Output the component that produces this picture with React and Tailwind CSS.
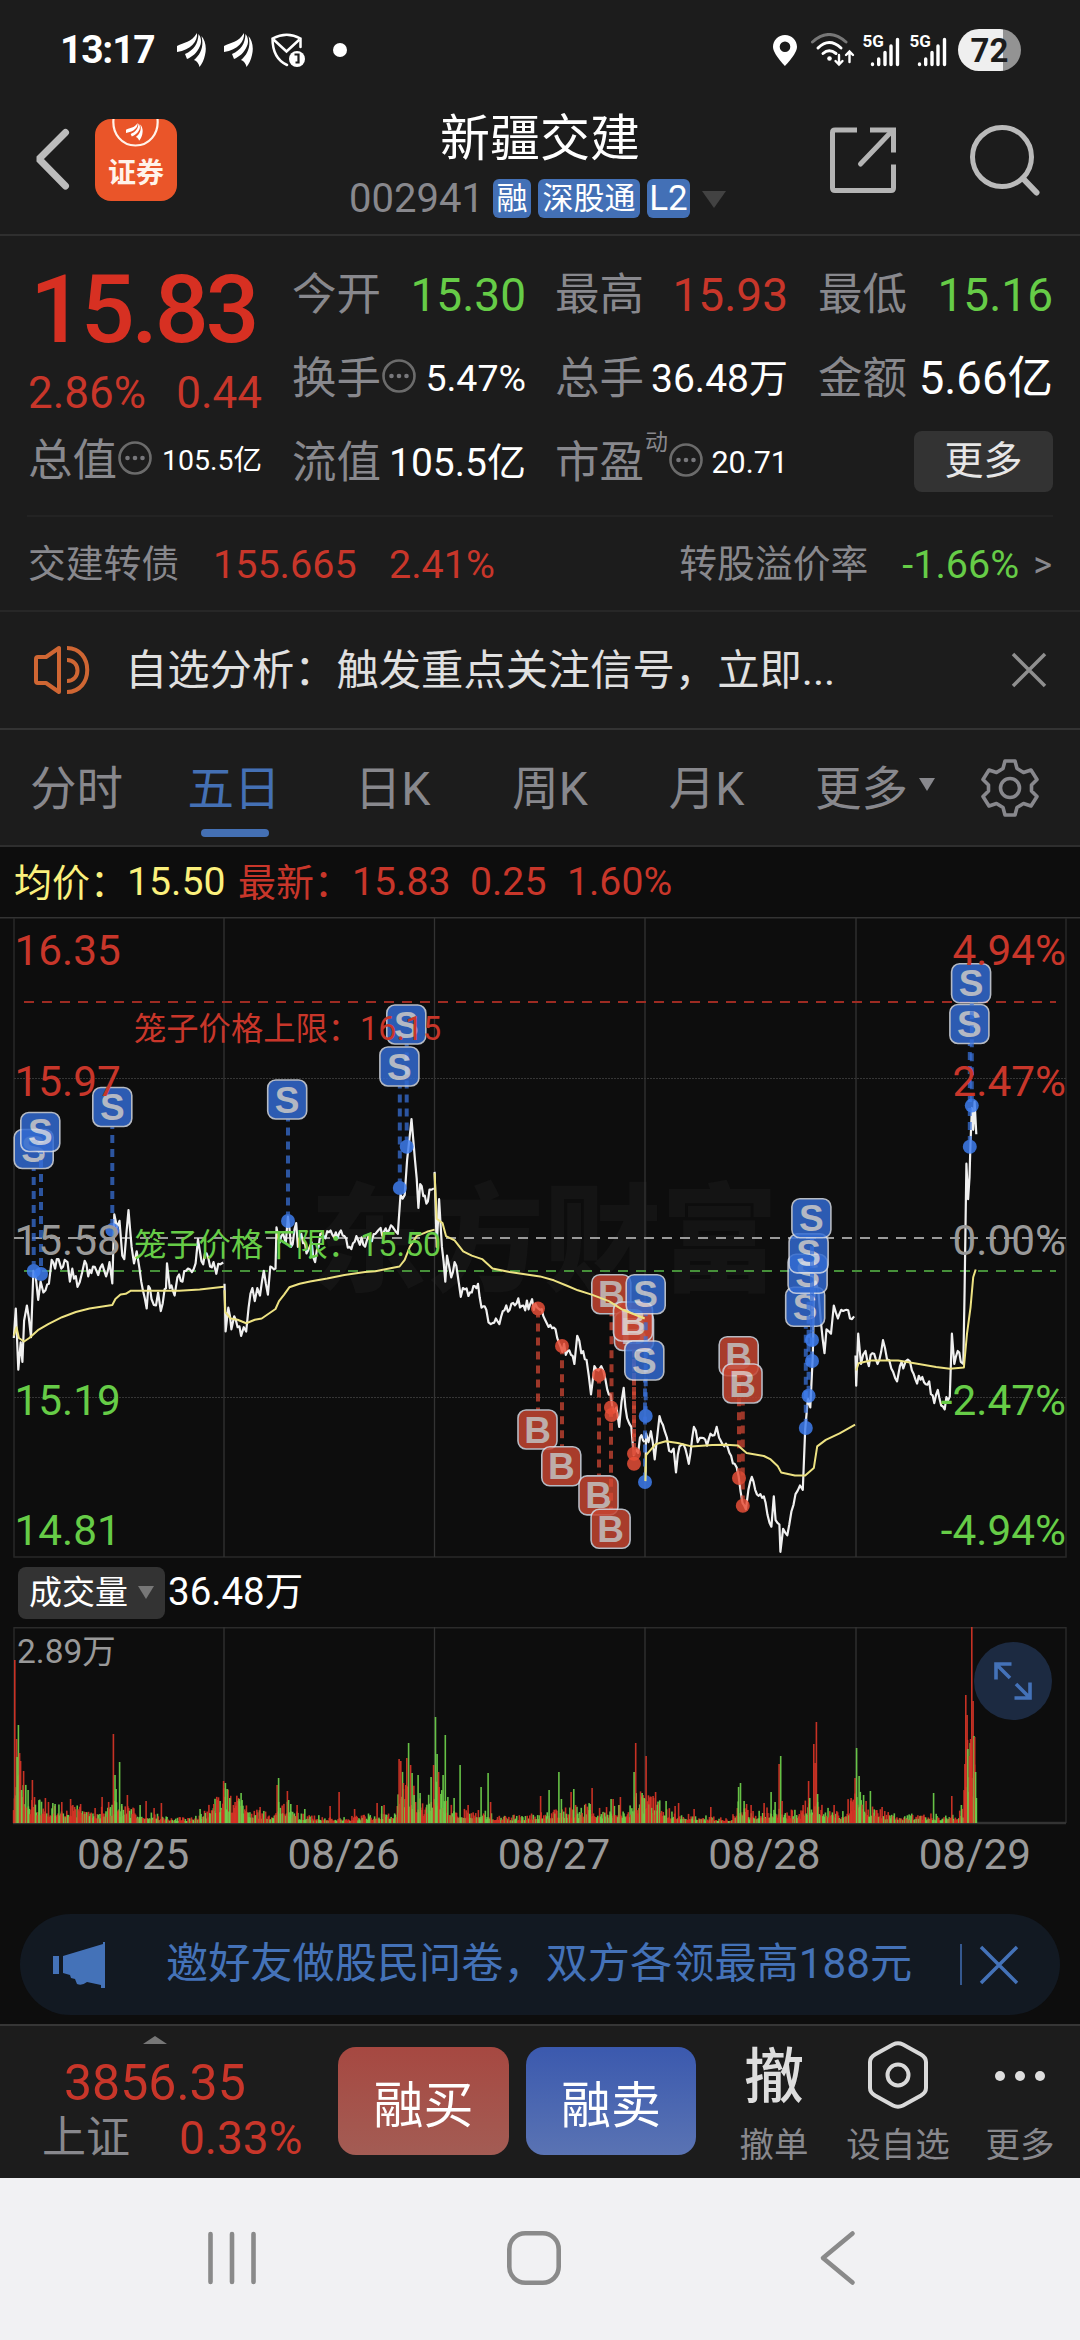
import React from 'react';
import { clsx } from 'clsx';

const RED = '#c8362a';
const GREEN = '#66cc47';

// recorded trace units -> chart pixels
const SX = 0.34439;
const SY = 0.43367;
const HALF = 1568;

// deterministic jitter so the chart never changes between renders
function makeRandom(seed) {
  let s = seed;
  return () => {
    s = (s * 1664525 + 1013904223) % 4294967296;
    return s / 4294967296;
  };
}

const parse = (str, offset = 0) =>
  str.trim().split(/\s+/).map((p) => {
    const [x, y] = p.split(',').map(Number);
    return [x + offset, y];
  });

const PRICE = [
  parse('40,1010 46,942 53,1083 60,1020 65,1065 70,970 78,935 90,1008 97,855 104,870 111,922 118,880 126,905 132,900 142,885 150,830 160,850 170,828 178,850 188,830 196,835 203,880 210,850 225,892 238,860 246,832 256,868 270,845 285,865 297,840 308,868 318,835 326,884 332,725 340,755 347,740 355,820 361,828 373,715 382,800 389,838 397,810 405,850 415,900 426,942 431,890 440,920 453,935 459,905 467,948 478,898 482,895 485,838 493,895 507,912 515,870 530,880 540,855 552,852 568,838 575,782 590,840 600,815 610,845 620,835 628,862 640,840 648,836'),
  parse('652,885 655,995 663,940 672,990 680,960 690,985 700,1005 708,985 715,995 722,940 733,895 740,925 747,895 755,912 766,855 778,910 785,845 800,850 803,755 812,790 822,770 830,790 836,730 845,800 860,745 865,800 875,770 890,815 905,790 915,835 930,770 945,780 960,762 970,778 985,768 1000,775 1015,800 1035,775 1055,795 1075,785 1095,765 1115,765 1135,750 1155,770 1163,680 1175,680 1182,600 1195,505 1205,600 1215,710 1220,655 1238,700 1247,668 1260,665'),
  [
    ...parse('1262,627 1268,800 1275,690 1283,800 1293,880 1298,820 1310,870 1320,835 1330,870 1338,915 1350,898 1370,905 1388,885 1398,940 1412,945 1425,978 1440,965 1450,978 1470,935 1480,945 1500,930 1520,935 1540,930 1560,940'),
    ...parse('0,945 10,960 30,980 45,990 60,1030 80,1040 100,1070 108,1005 120,1045 135,1060 148,1140 158,1075 170,1085 178,1075 190,1105 205,1140 215,1180 222,1170 230,1215 243,1125 253,1195 265,1215 272,1280 285,1275 290,1240 304,1250', HALF),
  ],
  parse('306,1340 308,1230 315,1250 322,1225 333,1290 340,1240 347,1190 362,1225 375,1270 388,1265 395,1320 405,1260 413,1255 422,1265 432,1300 447,1215 458,1250 470,1240 485,1258 500,1235 513,1215 520,1240 535,1260 550,1275 565,1300 577,1330 588,1390 598,1405 605,1360 615,1330 625,1360 640,1370 655,1390 672,1445 679,1375 684,1430 695,1440 698,1503 706,1450 718,1465 730,1410 742,1370 755,1350 763,1360 770,1220 778,1150 785,1170 792,1050 795,930 800,880 808,900 816,975 826,1045 832,990 845,1000 853,935 865,965 875,945 890,945 900,965 912,960', HALF),
  parse('916,1050 918,1120 924,1000 932,1070 945,1040 955,1075 965,1045 980,1070 996,1015 1008,1060 1020,1080 1037,1110 1045,1075 1055,1080 1068,1060 1080,1085 1095,1115 1110,1100 1130,1110 1145,1160 1155,1130 1170,1168 1190,1145 1196,1000 1203,1070 1213,1040 1222,1065 1229,1070 1233,900 1238,608 1243,690 1247,640 1250,560 1254,480 1258,530 1262,465 1267,540', HALF),
];

const AVERAGE = [
  parse('40,1005 48,985 55,1010 70,1018 85,1010 110,992 140,978 180,962 220,950 260,942 326,934 335,920 350,910 365,908 380,901 450,901 520,901 580,898 650,892'),
  parse('652,900 654,950 670,965 690,968 715,976 740,968 760,965 800,943 810,925 825,910 840,893 870,885 900,880 950,873 1000,865 1060,858 1090,856 1130,850 1160,845 1175,830 1190,800 1210,775 1240,765 1262,760'),
  [
    ...parse('1262,630 1268,735 1285,745 1295,775 1320,785 1345,810 1370,820 1400,828 1430,850 1480,858 1568,868'),
    ...parse('40,877 80,890 110,900 150,910 200,925 240,945 304,965', HALF),
  ],
  parse('306,1340 308,1280 335,1255 365,1248 400,1252 440,1260 500,1257 540,1256 575,1258 600,1275 650,1282 670,1290 690,1305 700,1320 740,1327 770,1327 795,1310 805,1260 830,1245 870,1230 915,1210', HALF),
  parse('918,1085 925,1068 960,1062 1040,1062 1100,1070 1150,1077 1190,1081 1231,1078 1240,1000 1250,940 1258,870 1265,852', HALF),
];

const toPath = (pts) =>
  pts.map(([x, y], i) => `${i ? 'L' : 'M'}${(x * SX).toFixed(1)} ${(900 + y * SY).toFixed(1)}`).join('');

function roughen(pts, seed) {
  const rand = makeRandom(seed);
  const out = [pts[0]];
  for (let i = 1; i < pts.length; i++) {
    const [x0, y0] = pts[i - 1];
    const [x1, y1] = pts[i];
    const steps = Math.floor((x1 - x0) / 4.5);
    for (let k = 1; k < steps; k++) {
      const t = k / steps;
      out.push([x0 + (x1 - x0) * t, y0 + (y1 - y0) * t + (rand() - 0.5) * 26]);
    }
    out.push(pts[i]);
  }
  return out;
}

// kind, box centre x / y, dot x / y
const TRADES = [
  ['S', 33.7, 1149, 33.7, 1271],
  ['S', 40.3, 1132, 41, 1274],
  ['S', 112.3, 1107, 112.3, 1230],
  ['S', 287.2, 1099.5, 288, 1221],
  ['S', 406.3, 1024.5, 406.7, 1146.7],
  ['S', 399.4, 1066.5, 399.8, 1188],
  ['B', 537.5, 1429.5, 538, 1308.5],
  ['B', 561.3, 1466.3, 562, 1346],
  ['B', 598.5, 1495.4, 599, 1375],
  ['B', 610.6, 1528.8, 611, 1407.5],
  ['B', 611.3, 1294.2, 611.5, 1415],
  ['B', 634, 1331, 634, 1453.8],
  ['B', 633, 1321.5, 634, 1463.7],
  ['S', 645.7, 1294.2, 645.7, 1416],
  ['S', 644.3, 1360.5, 645, 1482],
  ['B', 738.7, 1356.2, 739, 1478],
  ['B', 742.5, 1383.5, 742.8, 1505.8],
  ['S', 805.2, 1306.8, 805.8, 1428],
  ['S', 807.6, 1273.8, 808.6, 1395.7],
  ['S', 808.6, 1253.4, 812, 1361],
  ['S', 811.4, 1218.3, 812, 1340],
  ['S', 969.4, 1024, 969.8, 1146.8],
  ['S', 971.1, 983.3, 971.8, 1105.6],
];

const VOLUME_BASE = [
  [14, 28], [20, 40], [30, 22], [50, 15], [75, 14], [100, 11], [112, 18], [122, 14], [140, 11], [155, 8], [165, 5], [190, 4],
  [205, 10], [224, 30], [240, 20], [255, 11], [274, 8], [279, 24], [295, 9], [310, 6], [350, 5], [380, 8], [396, 12],
  [402, 40], [415, 28], [425, 14], [434, 42], [446, 22], [456, 13], [475, 11], [500, 6], [520, 6], [545, 10], [560, 12],
  [575, 11], [590, 16], [600, 11], [630, 14], [637, 24], [655, 20], [668, 11], [690, 7], [730, 4], [738, 16], [750, 8],
  [770, 13], [785, 10], [800, 10], [806, 20], [820, 17], [840, 9], [856, 26], [870, 14], [885, 9], [900, 7], [930, 7],
  [955, 6], [963, 12], [967, 70], [976, 40],
];

// x, height; negative height marks a falling minute
const SPIKES = [
  [14.7, 163], [16.5, 84], [18.3, -98], [17, -66], [19.5, 70], [20.5, 62], [21.5, -33], [23.5, 52], [28, -33], [32.3, 43], [45.3, 25],
  [55, -19], [61.7, 21], [70.5, 24], [80.5, 19], [95, 15], [102, 26], [113.3, 89], [114.9, -48], [116, -34], [119.5, -61],
  [121.7, -19], [127.3, 28], [140, -18], [146, 22], [154, 15], [161.3, 20], [200, -14], [213.7, 19], [220, -22], [223.5, 42],
  [225.3, -40], [227, -34], [229.7, -25], [235, 21], [241, -30], [239, -24], [260, 16], [277, 38], [278.5, -45], [287.3, 32],
  [288.5, -23], [290.7, -19], [297, 18], [304.7, -14], [330, 17], [339, 31], [354.5, 14], [377, 20], [381.7, -17], [384, 18],
  [399, 64], [400.7, 62], [403.3, 40], [405.7, 38], [406.7, 65], [408.5, -80], [410.5, 58], [412, -50], [414, -28], [418, -48],
  [420, -30], [431, -46], [433.5, 58], [435.4, -106], [437, -69], [438.5, 51], [443, -48], [445.2, -88], [454, -25], [460, -58],
  [468, 18], [481, -36], [488, -50], [490.5, 21], [540.5, 27], [549, -33], [558.8, -51], [561.3, -24], [571, 31], [573.7, -34],
  [575.5, 18], [592, 35], [590, -19], [611, -24], [613, 24], [619, -18], [620.3, 26], [634, -51], [635.6, 80], [642, -30],
  [644, -25], [646, 67], [650, 25], [653, 27], [655.5, 31], [666, -22], [675, 17], [678.5, 20], [694, 14], [710.7, 16],
  [738.5, -36], [740.4, -40], [744, -22], [746.5, 19], [751, 18], [764, 20], [771, -31], [775, -21], [779, 59], [780.6, -67],
  [782, 22], [803, 18], [808.5, 42], [809.6, -25], [813.7, 79], [815, 60], [816.3, 101], [817.5, -29], [834, 18], [851, 25],
  [855, 45], [856.5, -75], [859, -47], [863.5, -28], [866, 22], [870.3, -32], [882, 16], [933.5, -30], [951.7, 27], [961.3, -18],
  [964.8, 59], [965.7, 128], [967, 108], [967.8, -74], [969.5, 67], [970.5, 84], [971.7, 196], [973, 122], [973.9, -87], [974.6, 86],
  [975.5, -51], [976.3, -25],
];

function buildVolume() {
  const rand = makeRandom(29);
  const bars = [];
  let k = 0;
  for (let x = 13.5; x < 976; x += 0.872) {
    while (k < VOLUME_BASE.length - 2 && VOLUME_BASE[k + 1][0] < x) k++;
    const [x0, h0] = VOLUME_BASE[k];
    const [x1, h1] = VOLUME_BASE[k + 1];
    const t = Math.max(0, Math.min(1, (x - x0) / (x1 - x0)));
    const r = rand();
    const h = Math.max((h0 + (h1 - h0) * t) * (0.4 + r * r), 2);
    bars.push([x, rand() > 0.45 ? h : -h]);
  }
  return bars.concat(SPIKES);
}

const VOLUME = buildVolume();
const DIVIDERS = [224, 434.5, 645, 856];

function StatusBar() {
  return (
    <div className="flex h-[100px] shrink-0 items-center pl-[60px] pr-[59px] text-white">
      <span className="w-[117px] text-[39px] leading-none font-bold tracking-[-1.2px]">13:17</span>
      <Wing className="h-[34px] w-[29px]" />
      <Wing className="ml-[18px] h-[34px] w-[29px]" />
      <svg viewBox="0 0 34 34" className="ml-[18px] h-[34px] w-[34px]" fill="none">
        <path d="M1.500 5.500Q16 -2 29.500 5.500V14M1.500 5.500C1.500 17 5 27 16 32" stroke="white" strokeWidth="2.500" strokeLinecap="round" />
        <path d="M2.500 6.500L15.500 18.500L28.500 6.500" stroke="white" strokeWidth="2.500" />
        <circle cx="26" cy="26" r="8" fill="white" />
        <path d="M23.500 21.500H27.500V29.500H24.500" stroke="#1c1c1c" strokeWidth="2.200" />
      </svg>
      <span className="ml-[28px] h-[14px] w-[14px] rounded-full bg-white" />
      <svg viewBox="0 0 24 31" className="ml-auto h-[31px] w-[24px]">
        <path fillRule="evenodd" fill="white" d="M12 0C5.200 0 0 5.200 0 11.800C0 19 12 31 12 31S24 19 24 11.800C24 5.200 18.800 0 12 0ZM12 6.500a5.300 5.300 0 1 1 0 10.600a5.300 5.300 0 1 1 0-10.600Z" />
      </svg>
      <svg viewBox="0 0 44 34" className="ml-[14px] h-[34px] w-[44px]" fill="none" strokeLinecap="round">
        <path d="M1.500 9Q18 -6 35 9" stroke="#777" strokeWidth="3" />
        <path d="M7 15Q18 4 30 15M12 20.500Q18 15 25 20.500" stroke="white" strokeWidth="3" />
        <circle cx="18.500" cy="25.500" r="2.300" fill="white" />
        <path d="M28 22V31M24.500 28L28 31.500L31.500 28M38.500 29V19M35 22L38.500 18.500L42 22" stroke="white" strokeWidth="2.400" />
      </svg>
      <Signal className="ml-[7px]" />
      <Signal className="ml-[9px]" />
      <div className="ml-[11px] flex h-[42px] w-[63px] items-center justify-center rounded-full bg-linear-to-r from-[#efefef] from-72% to-[#939393] to-72% text-[33px] leading-none font-bold text-[#1c1c1c]">
        72
      </div>
    </div>
  );
}

function Wing({ className }) {
  return (
    <svg viewBox="0 0 29 34" className={className} fill="white">
      <path d="M0 13C7 9 14 10 20 0C21 8 14 17 0 19Z" />
      <path d="M8 21C17 17 21 11 21.500 1C24 4 25 9 23 13C20 20 15 24 10 26Z" />
      <path d="M17 27C24 21 27 13 24.500 3C28 7 30 14 28 22C27 27 25 31 22.500 34C22 31 20 28 17 27Z" />
    </svg>
  );
}

function Signal({ className }) {
  return (
    <svg viewBox="0 -6 38 46" className={clsx('h-[46px] w-[38px]', className)}>
      <text x="0.500" y="13.500" fontFamily="Roboto" fontWeight="700" fontSize="17" fill="white">5G</text>
      <path d="M10.500 31V31.500M16.700 26V31.500M23 19.500V31.500M29 13V31.500M35.500 6.500V31.500" stroke="white" strokeWidth="3.400" strokeLinecap="round" />
    </svg>
  );
}

function Header() {
  return (
    <div className="relative flex h-[136px] shrink-0 items-center border-b-2 border-[#2f2f2f]">
      <svg viewBox="0 0 36 62" className="ml-[34px] mt-[-16px] h-[62px] w-[36px]" fill="none">
        <path d="M31.500 4.500L5 31L31.500 58" stroke="#bcbcbc" strokeWidth="7" strokeLinecap="round" strokeLinejoin="bevel" />
      </svg>
      <div className="ml-[25px] mt-[-15px] flex h-[82px] w-[82px] flex-col items-center overflow-hidden rounded-[16px] bg-[#ea5529]">
        <svg viewBox="0 0 82 34" className="h-[34px] w-[82px] shrink-0" fill="none">
          <path d="M18.500 0C17 15 27 26.500 40.500 26.500S64 15 62.500 0" stroke="#fff3ea" strokeWidth="2.200" />
          <g transform="translate(31 4) scale(0.58 0.52)" fill="white">
            <path d="M0 13C7 9 14 10 20 0C21 8 14 17 0 19Z" />
            <path d="M8 21C17 17 21 11 21.500 1C24 4 25 9 23 13C20 20 15 24 10 26Z" />
            <path d="M17 27C24 21 27 13 24.500 3C28 7 30 14 28 22C27 27 25 31 22.500 34C22 31 20 28 17 27Z" />
          </g>
        </svg>
        <span className="-mt-[1px] font-['Noto_Sans_CJK_SC',sans-serif] text-[28px] leading-[38px] font-bold text-[#fff3ea]">证券</span>
      </div>
      <div className="absolute top-0 left-[349px] flex w-[380px] flex-col">
        <div className="mt-[12px] h-[54px] pl-[91px] text-[50px] leading-[54px] text-white">新疆交建</div>
        <div className="mt-[12px] flex h-[41px] items-center text-white">
          <span className="w-[144px] text-[40px] leading-none text-[#88888d]">002941</span>
          <Badge className="w-[38px]">融</Badge>
          <Badge className="ml-[7px] w-[102px]">深股通</Badge>
          <Badge className="ml-[7px] w-[43px] text-[35px]">L2</Badge>
          <span className="ml-[12px] mt-[2px] border-x-[12px] border-t-[17px] border-x-transparent border-t-[#424242]" />
        </div>
      </div>
      <svg viewBox="0 0 68 68" className="ml-auto mr-[72px] mt-[-14px] h-[68px] w-[68px]" fill="none" stroke="#b4b4b4" strokeWidth="5">
        <path d="M28 4H6Q3.500 4 3.500 6.500V62Q3.500 64.500 6 64.500H62Q64.500 64.500 64.500 62V38.500M41 4H64.500V26.500" />
        <path d="M63 5L31.500 38" strokeLinecap="round" />
      </svg>
      <svg viewBox="0 0 72 72" className="mr-[39px] mt-[-14px] h-[72px] w-[72px]" fill="none" stroke="#bababa">
        <circle cx="33" cy="33" r="29.500" strokeWidth="5" />
        <path d="M54 54.500L67.500 68.500" strokeWidth="6" strokeLinecap="round" />
      </svg>
    </div>
  );
}

function Badge({ className, children }) {
  return (
    <span className={clsx('flex h-[39px] shrink-0 items-center justify-center rounded-[6px] bg-[#4370b6] text-[31px] leading-none', className)}>
      {children}
    </span>
  );
}

function Ellipsis() {
  return (
    <svg viewBox="0 0 34 34" className="h-[34px] w-[34px] shrink-0">
      <circle cx="17" cy="17" r="15.500" fill="none" stroke="#6b6b6b" strokeWidth="2.600" />
      <g fill="#77777b">
        <circle cx="9.500" cy="17" r="2.300" />
        <circle cx="17" cy="17" r="2.300" />
        <circle cx="24.500" cy="17" r="2.300" />
      </g>
    </svg>
  );
}

function Stat({ label, info, sup, value, className }) {
  return (
    <div className="flex h-[84px] items-center">
      <span className="-ml-[1px] text-[44.5px] leading-none text-[#88888d]">{label}</span>
      {sup && <span className="-mt-[42px] ml-[1px] text-[23px] leading-none text-[#88888d]">{sup}</span>}
      {info && <span className="ml-[1px] -mt-[6px]"><Ellipsis /></span>}
      <span className={clsx('ml-auto leading-none whitespace-nowrap', className)}>{value}</span>
    </div>
  );
}

function Quote() {
  return (
    <div className="mx-[27px] flex h-[281px] shrink-0 border-b-2 border-[#232323] pt-[16px]">
      <div className="flex w-[235px] shrink-0 flex-col">
        <div className="h-[115px] pl-[3px] text-[95px] leading-[115px] font-medium tracking-[-3.200px] text-[#d73022]">15.83</div>
        <div className="flex h-[52px] items-center justify-between pl-[1px] text-[44px] leading-none text-[#c8362a]">
          <span>2.86%</span>
          <span>0.44</span>
        </div>
        <div className="pl-[2px]">
          <Stat label="总值" info value="105.5亿" className="text-[28.5px] text-white" />
        </div>
      </div>
      <div className="mt-px ml-[31px] w-[233px]">
        <Stat label="今开" value="15.30" className="text-[46px] text-[#66cc47]" />
        <Stat label="换手" info value="5.47%" className="text-[37.500px] text-white" />
        <Stat label="流值" value="105.5亿" className="text-[39px] text-white" />
      </div>
      <div className="mt-px ml-[30px] w-[232px]">
        <Stat label="最高" value="15.93" className="text-[46px] text-[#c8362a]" />
        <Stat label="总手" value="36.48万" className="text-[39px] text-white" />
        <Stat label="市盈" sup="动" info value="20.71" className="text-[30.500px] text-white" />
      </div>
      <div className="mt-px ml-[31px] w-[234px]">
        <Stat label="最低" value="15.16" className="text-[46px] text-[#66cc47]" />
        <Stat label="金额" value="5.66亿" className="text-[45.500px] text-white" />
        <button className="mt-[10px] ml-auto flex h-[61px] w-[139px] items-center justify-center rounded-[8px] bg-[#333] text-[39px] leading-none text-[#e6e6e6]">
          更多
        </button>
      </div>
    </div>
  );
}

function BondRow() {
  return (
    <div className="flex h-[95px] shrink-0 items-center border-b-2 border-[#272727] px-[28px] pt-[2px] text-[39.500px] leading-none text-[#c8362a]">
      <span className="w-[185px] text-[37.800px] text-[#88888d]">交建转债</span>
      <span className="w-[176px]">155.665</span>
      <span>2.41%</span>
      <span className="ml-auto text-[37.800px] text-[#88888d]">转股溢价率</span>
      <span className="ml-[34px] text-[#66cc47]">-1.66%</span>
      <span className="ml-[14px] text-[36px] text-[#88888d]">&gt;</span>
    </div>
  );
}

function Notice() {
  return (
    <div className="flex h-[118px] shrink-0 items-center border-b-2 border-[#333] pr-[33px] pl-[32px]">
      <svg viewBox="0 0 60 50" className="h-[50px] w-[60px]" fill="none" stroke="#cf6633" strokeWidth="4" strokeLinejoin="round">
        <path d="M4 14Q4 12 6 12H14L27 3V47L14 38H6Q4 38 4 36Z" />
        <path d="M35 3C62 3 62 47 35 47M35 15C49 15 49 36 35 36" />
      </svg>
      <span className="mt-[2px] ml-[33px] text-[42.300px] leading-none text-[#e0e0e0]">自选分析：触发重点关注信号，立即...</span>
      <svg viewBox="0 0 36 36" className="ml-auto h-[36px] w-[36px]">
        <path d="M2 2L34 34M34 2L2 34" stroke="#8f8f8f" strokeWidth="3.500" />
      </svg>
    </div>
  );
}

const TABS = [
  { label: '分时', width: 'w-[157px]' },
  { label: '五日', width: 'w-[158px]', active: true },
  { label: '日K', width: 'w-[159px]' },
  { label: '周K', width: 'w-[156px]' },
  { label: '月K', width: 'w-[157px]' },
];

function Tabs() {
  return (
    <div className="flex h-[117px] shrink-0 border-b-2 border-[#2e2e2e] text-[46.500px] leading-none text-[#88888d]">
      {TABS.map((tab) => (
        <div key={tab.label} className={clsx('relative flex items-center justify-center pt-[4px] first:-ml-px', tab.width)}>
          <span className={clsx('-ml-[2px]', tab.active && 'text-[#4470b4]')}>{tab.label}</span>
          {tab.active && <span className="absolute bottom-[8px] left-1/2 h-[8px] w-[68px] -translate-x-1/2 rounded-full bg-[#4470b4]" />}
        </div>
      ))}
      <div className="ml-[29px] flex items-center pt-[4px]">
        更多
        <span className="ml-[11px] -mt-[10px] border-x-[8px] border-t-[13px] border-x-transparent border-t-[#88888d]" />
      </div>
      <svg viewBox="0 0 60 60" className="my-auto ml-[45px] h-[60px] w-[60px]" fill="none" stroke="#88888d" strokeWidth="3.600" strokeLinejoin="round">
        <path d="M25 3H35L37 10.500L43.500 14.500L51 12L57 21.500L51.500 27V33L57 38.500L51 48L43.500 45.500L37 49.500L35 57H25L23 49.500L16.500 45.500L9 48L3 38.500L8.500 33V27L3 21.500L9 12L16.500 14.500L23 10.500Z" />
        <circle cx="30" cy="30" r="9.500" />
      </svg>
    </div>
  );
}

function PriceLine() {
  return (
    <div className="flex h-[70px] shrink-0 items-center pt-[2px] pl-[14px] text-[39.200px] leading-none text-[#c8362a]">
      <span className="w-[113px] text-[38px] whitespace-nowrap text-[#fbf07c]">均价：</span>
      <span className="w-[111px] text-[#fbf07c]">15.50</span>
      <span className="w-[114px] text-[38px] whitespace-nowrap">最新：</span>
      <span className="w-[118px]">15.83</span>
      <span className="w-[97px]">0.25</span>
      <span>1.60%</span>
    </div>
  );
}

function Trade({ trade }) {
  const [kind, x, y, dotX, dotY] = trade;
  const sell = kind === 'S';
  return (
    <g opacity="0.84">
      <line x1={dotX} x2={dotX} y1={y} y2={dotY} stroke={sell ? '#3a72dc' : '#d84a35'} strokeWidth="4" strokeDasharray="8 6" opacity="0.85" />
      <circle cx={dotX} cy={dotY} r="7" fill={sell ? '#3f7ef0' : '#e84f38'} />
      <rect x={x - 19.5} y={y - 19.5} width="39" height="39" rx="8" fill={sell ? '#326bd2' : '#c64531'} stroke="#d6dbe6" strokeWidth="1.600" />
      <text x={x} y={y + 13} textAnchor="middle" fontFamily="Liberation Sans" fontWeight="700" fontSize="37" fill={sell ? '#d3d9e6' : '#dfccc9'}>{kind}</text>
    </g>
  );
}

function PriceChart() {
  const axis = [
    [965, '16.35', '4.94%', RED],
    [1096, '15.97', '2.47%', RED],
    [1254.5, '15.58', '0.00%', '#999999'],
    [1415, '15.19', '-2.47%', GREEN],
    [1545, '14.81', '-4.94%', GREEN],
  ];
  return (
    <svg viewBox="0 917 1080 641" className="block h-[641px] w-full shrink-0" fontFamily="Roboto, 'Noto Sans CJK SC', sans-serif">
      <text x="310" y="1282" fontSize="117" fontWeight="900" fill="#141414">东方财富</text>
      <path d="M0 917.500H1080" stroke="#333" strokeWidth="2" />
      <path d="M14 918V1557H1066V918" fill="none" stroke="#282828" strokeWidth="1.500" />
      {DIVIDERS.map((x) => <path key={x} d={`M${x} 918V1557`} stroke="#333" strokeWidth="1.300" />)}
      <path d="M14 1078.500H1066M14 1397.500H1066" stroke="#363636" strokeWidth="1" strokeDasharray="2 1" />
      <path d="M14 1238H1066" stroke="#9a9a9a" strokeWidth="1.800" strokeDasharray="10 8" />
      <path d="M24 1002H1056" stroke="#9d2b22" strokeWidth="1.800" strokeDasharray="10 8" />
      <path d="M24 1271H1056" stroke="#46903a" strokeWidth="1.800" strokeDasharray="10 8" />
      {PRICE.map((pts, i) => (
        <path key={i} d={toPath(roughen(pts, 11 + i))} fill="none" stroke="#f0f0f0" strokeWidth="2.200" strokeLinejoin="round" />
      ))}
      {TRADES.map((trade, i) => <Trade key={i} trade={trade} />)}
      {AVERAGE.map((pts, i) => (
        <path key={i} d={toPath(pts)} fill="none" stroke="#ede282" strokeWidth="2" strokeLinejoin="round" />
      ))}
      {axis.map(([y, price, pct, color]) => (
        <g key={price} fontSize="42.300" fill={color}>
          <text x="14.500" y={y}>{price}</text>
          <text x="1066" y={y} textAnchor="end">{pct}</text>
        </g>
      ))}
      <text x="134" y="1040" fontSize="32.300" fill={RED}>笼子价格上限：16.15</text>
      <text x="134" y="1255.500" fontSize="32.300" fill={GREEN}>笼子价格下限：15.50</text>
    </svg>
  );
}

function VolumePanel() {
  return (
    <div className="relative shrink-0">
      <div className="flex h-[69px] items-center pl-[18px] text-white">
        <button className="flex h-[52px] w-[147px] items-center rounded-[8px] bg-[#333] pl-[11px] text-[33px] leading-none">
          成交量
          <span className="ml-[10px] border-x-[8px] border-t-[13px] border-x-transparent border-t-[#777]" />
        </button>
        <span className="ml-[3px] text-[38.500px] leading-none">36.48万</span>
      </div>
      <svg viewBox="0 1627 1080 198" className="block h-[198px] w-full" fontFamily="Roboto, 'Noto Sans CJK SC', sans-serif">
        <path d="M14 1823V1627.700H1066V1823" fill="none" stroke="#2b2b2b" strokeWidth="1.400" />
        {DIVIDERS.map((x) => <path key={x} d={`M${x} 1627V1823`} stroke="#333" strokeWidth="1.300" />)}
        <path d="M13 1823H1066" stroke="#333" strokeWidth="2.500" />
        {VOLUME.map(([x, h], i) => (
          <rect key={i} x={x - 0.7} y={1823 - Math.abs(h)} width="1.600" height={Math.abs(h)} fill={h > 0 ? '#d63426' : '#6ed04b'} opacity="0.92" />
        ))}
        <text x="17" y="1663" fontSize="33.500" fill="#999">2.89万</text>
      </svg>
      <div className="flex h-[60px] items-center pl-[28px] text-[42.200px] leading-none text-[#999]">
        {['08/25', '08/26', '08/27', '08/28', '08/29'].map((day) => (
          <span key={day} className="w-[210.4px] text-center">{day}</span>
        ))}
      </div>
      <button className="absolute top-[84px] right-[28px] flex h-[78px] w-[78px] items-center justify-center rounded-full bg-[#1c2a41]">
        <svg viewBox="0 0 40 40" className="h-[40px] w-[40px]" fill="none" stroke="#4472b8" strokeWidth="3.600">
          <path d="M18.500 3H3V18.500M3 3L17 17M21.500 37H37V21.500M37 37L23 23" />
        </svg>
      </button>
    </div>
  );
}

function Banner() {
  return (
    <div className="mx-[20px] mt-[29px] flex h-[101px] shrink-0 items-center rounded-full bg-[#121922] pl-[33px] text-[#4472b8]">
      <svg viewBox="0 0 52 46" className="h-[46px] w-[52px]" fill="currentColor">
        <path d="M0 14H6V32H0ZM10 14L50 2V0H52V46H48V43L34 40Q29 44 24 42L22 37L18 36L17 33L10 31Z" />
      </svg>
      <span className="ml-[61px] text-[42.200px] leading-none whitespace-nowrap">邀好友做股民问卷，双方各领最高188元</span>
      <span className="ml-auto h-[41px] w-[2px] bg-[#35588f]" />
      <svg viewBox="0 0 40 40" className="mr-[41px] ml-[17px] h-[40px] w-[40px]">
        <path d="M2 2L38 38M38 2L2 38" stroke="currentColor" strokeWidth="3.500" />
      </svg>
    </div>
  );
}

function Action({ label, className, children }) {
  return (
    <div className={clsx('flex flex-col items-center', className)}>
      <div className="mt-[15px] flex h-[70px] items-center justify-center">{children}</div>
      <span className="mt-[17px] text-[34.500px] leading-none whitespace-nowrap text-[#88888d]">{label}</span>
    </div>
  );
}

function BottomBar() {
  return (
    <div className="mt-[9px] flex h-[154px] shrink-0 border-t-2 border-[#363636] bg-[#1c1c1c]">
      <div className="flex w-[338px] flex-col pr-[26px]">
        <span className="mt-[10px] ml-[143px] h-0 w-0 border-x-[12px] border-b-[8px] border-x-transparent border-b-[#777]" />
        <span className="mt-[11px] pl-[64px] text-[50px] leading-[56px] text-[#c8362a]">3856.35</span>
        <div className="flex h-[54px] items-center pl-[42px] text-[44px] leading-none text-[#88888d]">
          上证
          <span className="ml-[49px] text-[46px] text-[#c8362a]">0.33%</span>
        </div>
      </div>
      <button className="mt-[21px] flex h-[108px] w-[171px] items-center justify-center rounded-[18px] bg-linear-to-b from-[#a64841] to-[#a35c54] pt-[9px] text-[50px] leading-none text-white">融买</button>
      <button className="mt-[21px] ml-[17px] flex h-[108px] w-[170px] items-center justify-center rounded-[18px] bg-linear-to-b from-[#3b59ae] to-[#5a73b3] pt-[9px] text-[50px] leading-none text-white">融卖</button>
      <Action label="撤单" className="ml-[28px] w-[100px]">
        <span className="mt-[4px] text-[60px] leading-none font-medium text-[#dedede]">撤</span>
      </Action>
      <Action label="设自选" className="ml-[14px] w-[120px]">
        <svg viewBox="0 0 60 68" className="-mt-[2px] h-[68px] w-[60px]" fill="none" stroke="#d9d9d9" strokeWidth="4">
          <path d="M25 3.500Q30 1 35 3.500L53 13.500Q58 16.500 58 21V47Q58 51.500 53 54.500L35 64.500Q30 67 25 64.500L7 54.500Q2 51.500 2 47V21Q2 16.500 7 13.500Z" />
          <circle cx="30" cy="34" r="10.500" />
        </svg>
      </Action>
      <Action label="更多" className="ml-[12px] w-[100px]">
        <div className="flex gap-[10px]">
          <span className="h-[10px] w-[10px] rounded-full bg-[#dedede]" />
          <span className="h-[10px] w-[10px] rounded-full bg-[#dedede]" />
          <span className="h-[10px] w-[10px] rounded-full bg-[#dedede]" />
        </div>
      </Action>
    </div>
  );
}

function NavBar() {
  return (
    <div className="flex flex-1 bg-[#f1f1f3] pt-[52px]">
      <svg viewBox="0 0 52 56" className="ml-[206px] h-[56px] w-[52px]" stroke="#8a8a8a" strokeWidth="4.600" strokeLinecap="round">
        <path d="M4.500 4V52M26 4V52M47.500 4V52" />
      </svg>
      <svg viewBox="0 0 56 56" className="ml-[248px] h-[56px] w-[56px]" fill="none" stroke="#8a8a8a" strokeWidth="4.600">
        <rect x="3.300" y="3.300" width="49.400" height="49.400" rx="16" />
      </svg>
      <svg viewBox="0 0 38 56" className="ml-[257px] h-[56px] w-[38px]" fill="none" stroke="#8a8a8a" strokeWidth="4.600" strokeLinecap="round" strokeLinejoin="round">
        <path d="M33.500 3.500L4 28L33.500 52.500" />
      </svg>
    </div>
  );
}

export default function App() {
  return (
    <div className="flex h-[2340px] w-[1080px] flex-col overflow-hidden bg-[#0d0d0d] font-[Roboto,'Noto_Sans_CJK_SC',sans-serif]">
      <div className="flex shrink-0 flex-col bg-[#1c1c1c]">
        <StatusBar />
        <Header />
        <Quote />
        <BondRow />
        <Notice />
        <Tabs />
      </div>
      <PriceLine />
      <PriceChart />
      <VolumePanel />
      <Banner />
      <BottomBar />
      <NavBar />
    </div>
  );
}
